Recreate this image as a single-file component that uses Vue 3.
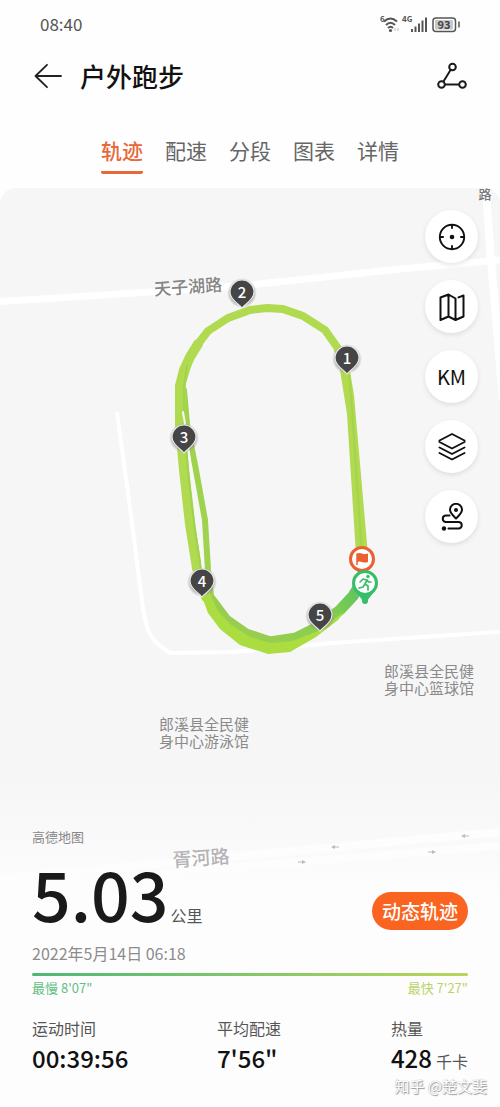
<script setup>
import { ref } from 'vue'

const tabs = ['轨迹', '配速', '分段', '图表', '详情']
const activeTab = ref('轨迹')

const kilometres = [
  { n: 1, x: 347, y: 359 },
  { n: 2, x: 242, y: 293 },
  { n: 3, x: 184, y: 438 },
  { n: 4, x: 202, y: 582 },
  { n: 5, x: 320, y: 616 },
]

const stats = [
  { label: '运动时间', value: '00:39:56', unit: '' },
  { label: '平均配速', value: '7\'56"', unit: '' },
  { label: '热量', value: '428', unit: '千卡' },
]
</script>

<template>
  <div class="page">
    <header>
      <div class="status">
        <span>08:40</span>
        <svg class="status-icons" width="80" height="20" viewBox="0 0 80 20" aria-hidden="true">
          <text x="0" y="8" class="tiny">6</text>
          <g fill="none" stroke="#555" stroke-width="2">
            <path d="M4 7.500Q10.500 1.500 17 7.500" />
            <path d="M6 11Q10.500 6.500 15 11" />
            <path d="M8 14Q10.500 11.500 13 14" />
          </g>
          <circle cx="10.500" cy="16.500" r="1.600" fill="#555" />
          <path d="M15 14v3M18 14v3" stroke="#bbb" />
          <text x="22" y="8" class="tiny">4G</text>
          <path d="M32 15v3M35.500 12.500V18M39 9.500V18M42.500 6.500V18M46 3.500V18" stroke="#555" stroke-width="2" />
          <rect x="53" y="4" width="22.500" height="13.500" rx="3" fill="#fff" stroke="#555" stroke-width="1.500" />
          <rect x="55" y="6" width="18" height="9.500" rx="1" fill="#c8c8c8" />
          <text x="64" y="15" text-anchor="middle" class="battery">93</text>
          <path d="M79 7.500v6" stroke="#555" stroke-width="1.500" />
        </svg>
      </div>
      <div class="title-bar">
        <button class="plain" aria-label="返回">
          <svg width="28" height="28" viewBox="0 0 28 28" fill="none" stroke="#222" stroke-width="1.800" stroke-linecap="round" stroke-linejoin="round">
            <path d="M27 14H1.500M13 2.800 1.500 14 13 25.200" />
          </svg>
        </button>
        <h1>户外跑步</h1>
        <button class="plain share" aria-label="分享">
          <svg width="30" height="28" viewBox="0 0 30 28" fill="none" stroke="#1a1a1a" stroke-width="2">
            <circle cx="15.500" cy="5" r="3.300" />
            <circle cx="4.500" cy="22.500" r="3.300" />
            <circle cx="25.500" cy="22.500" r="3.300" />
            <path d="M13.700 7.800 6.300 19.700M7.800 22.500h14.400" />
          </svg>
        </button>
      </div>
      <nav class="tabs">
        <button
          v-for="tab in tabs"
          :key="tab"
          :class="['tab', { active: tab === activeTab }]"
          @click="activeTab = tab"
        >{{ tab }}</button>
      </nav>
    </header>

    <main class="stage">
      <svg class="map" viewBox="0 188 500 919" preserveAspectRatio="xMidYMin slice">
        <defs>
          <linearGradient id="fade" x1="0" y1="0" x2="0" y2="1">
            <stop offset="0" stop-color="#fdfcfd" stop-opacity="0" />
            <stop offset="0.700" stop-color="#fdfcfd" stop-opacity="0.700" />
            <stop offset="1" stop-color="#fefdfe" />
          </linearGradient>
          <linearGradient id="lap" gradientUnits="userSpaceOnUse" x1="362" y1="590" x2="270" y2="645">
            <stop offset="0" stop-color="#58c45f" />
            <stop offset="0.350" stop-color="#84cd4f" />
            <stop offset="1" stop-color="#98ce50" />
          </linearGradient>
          <radialGradient id="halo">
            <stop offset="0.750" stop-color="#777" stop-opacity="0.600" />
            <stop offset="1" stop-color="#999" stop-opacity="0" />
          </radialGradient>
        </defs>
        <rect x="-500" y="188" width="1500" height="919" fill="#f7f6f7" />

        <g fill="none" stroke="#fff" stroke-linejoin="round">
          <path d="M-10 302 120 294 240 286 400 269 510 259" stroke-width="7" />
          <path d="M486 188 491 260 503 400" stroke-width="8" />
          <path d="M117 412 132 523 143 609Q147 632 153 639T170 653L233 652 333 643 510 631" stroke-width="4" />
          <path d="M-10 880 250 855 510 831M-10 891 250 866 510 845" stroke-width="8" />
        </g>

        <g fill="none" stroke-linejoin="round" stroke-linecap="round">
          <path d="M184 390 187 424 196 470 205 520 208 570 212 603" stroke="#9fd24f" stroke-width="6" />
          <path d="M211 600 226 620 246 634 270 642 296 638 318 627 340 610 353 596 363 580" stroke="url(#lap)" stroke-width="11" />
          <path d="M345 371 337 347 325 330 303 316 283 309 267 308 250 310 228 318 208 331 198 344 190 356 182 383 181 424" stroke="#b0da50" stroke-width="8" />
          <path d="M198 344 190 357 184 370 180 386 180 424 184 470 190 524 197 568 206 597" stroke="#b0da50" stroke-width="10" />
          <path d="M187 366 184 386 184 424 189 480 195 530 201 570" stroke="#9fd24f" stroke-width="2" />
          <path d="M183 412 185 424M188 446 194 490 200 540 203 570M209 597 212 603" stroke="#f8f8f5" stroke-width="2" />
        </g>
        <path d="M201 594 211 596 218 611 230 624 250 637 270 643 292 641 318 631 345 611 338 620 316 637 290 652 268 654 240 645 220 629 208 613Z" fill="#abdc40" />
        <path d="M340 370 350 371 354 395 368 555 356 555 347 414Z" fill="#b1da50" />
        <path d="M349 374 351 395 362 555" fill="none" stroke="#a2d44e" stroke-width="2" />

        <g v-for="k in kilometres" :key="k.n" :transform="`translate(${k.x} ${k.y})`">
          <circle r="15" fill="url(#halo)" />
          <path d="M0 15C-3 11-12 7-12-1A12 12 0 0 1 12-1C12 7 3 11 0 15Z" fill="#454545" stroke="#e8e8e8" stroke-width="1.200" />
          <text y="5" class="km">{{ k.n }}</text>
        </g>

        <g transform="translate(362 559)">
          <path d="M0 19-7 9H7Z" fill="#eb6030" />
          <circle r="11.500" fill="#fff" stroke="#eb6030" stroke-width="3" />
          <path d="M-5-5.500Q-2-6.500 0-5.500T6-5.500V3Q3 4 0 3T-5 3Z" fill="#eb6030" />
          <path d="M-5-5.500V6" stroke="#eb6030" stroke-width="1.500" />
        </g>
        <g transform="translate(365 583)">
          <circle cy="18" r="3" fill="#36bd68" />
          <path d="M-11 6-2 18H2L11 6Z" fill="#36bd68" />
          <circle r="11.500" fill="#fff" stroke="#36bd68" stroke-width="3" />
          <circle cx="3" cy="-6.500" r="1.700" fill="#36bd68" />
          <path d="M-5-1-2-4 2-3 0 1 3 3V7M0 1-2 4-6 5M2-3 3.500-1 6-1" fill="none" stroke="#36bd68" stroke-width="1.700" stroke-linecap="round" stroke-linejoin="round" />
        </g>
        <rect x="-500" y="770" width="1500" height="120" fill="url(#fade)" />
        <rect x="-500" y="889" width="1500" height="218" fill="#fefdfe" />

        <g fill="#bbb">
          <path d="m331 847 4-2v1.500h4v1h-4v1.500zM461 836l4-2v1.500h4v1h-4v1.500z" />
          <path d="m306 862-4-2v1.500h-4v1h4v1.500zM436 852l-4-2v1.500h-4v1h4v1.500z" />
        </g>
        <g class="road">
          <text x="188" y="293" transform="rotate(-4 189 287)" font-size="17" fill="#858585">天子湖路</text>
          <text x="201" y="865" transform="rotate(-4 200 858)" font-size="19" fill="#b4b3b4">胥河路</text>
          <text x="485" y="199" font-size="13" fill="#777">路</text>
        </g>
        <g class="place">
          <text x="429" y="677">郎溪县全民健</text>
          <text x="429" y="694">身中心篮球馆</text>
          <text x="204" y="730">郎溪县全民健</text>
          <text x="204" y="747">身中心游泳馆</text>
        </g>
      </svg>

      <div class="tools">
        <button class="tool" aria-label="定位">
          <svg width="28" height="28" viewBox="0 0 28 28" fill="none" stroke="#111" stroke-width="1.900">
            <circle cx="14" cy="14" r="12.200" />
            <path d="M14 1.800v4M14 22.200v4M1.800 14h4M22.200 14h4" />
            <circle cx="14" cy="14" r="2.300" fill="#111" stroke="none" />
          </svg>
        </button>
        <button class="tool" aria-label="地图">
          <svg width="28" height="28" viewBox="0 0 28 28" fill="none" stroke="#111" stroke-width="2" stroke-linejoin="round" stroke-linecap="round">
            <path d="M2.500 4.500 10.500 1.500V23.500L2.500 27ZM10.500 1.500 17.500 5.500V27L10.500 23.500M17.500 27 25.500 23.500V2.500L20.500 4.400" />
          </svg>
        </button>
        <button class="tool unit-tool">KM</button>
        <button class="tool" aria-label="图层">
          <svg width="28" height="28" viewBox="0 0 28 28" fill="none" stroke="#111" stroke-width="1.900" stroke-linejoin="round" stroke-linecap="round">
            <path d="M14 1 26.500 7.500V9L14 15.500 1.500 9V7.500ZM1.500 14.500 14 21 26.500 14.500M1.500 20 14 26.500 26.500 20" />
          </svg>
        </button>
        <button class="tool" aria-label="路线">
          <svg width="28" height="28" viewBox="0 0 28 28" fill="none" stroke="#111" stroke-width="2" stroke-linecap="round" stroke-linejoin="round">
            <path d="M18 15.500C15 12.500 12 10 12 6.800A6 6 0 0 1 24 6.800C24 10 21 12.500 18 15.500Z" />
            <circle cx="18" cy="7" r="2" fill="#111" stroke="none" />
            <path d="M11.500 12.500H7.500A3.300 3.300 0 0 0 7.500 19H21A3.300 3.300 0 0 1 21 25.500H10.500" />
            <circle cx="6" cy="25.500" r="2.200" fill="#111" stroke="none" />
          </svg>
        </button>
      </div>

      <section class="panel">
        <p class="credit">高德地图</p>
        <div class="summary">
          <p class="distance"><strong>5.03</strong><span>公里</span></p>
          <button class="replay">动态轨迹</button>
        </div>
        <p class="date">2022年5月14日 06:18</p>
        <div class="pace-bar"></div>
        <div class="pace-labels">
          <span class="slow">最慢 8'07"</span>
          <span class="fast">最快 7'27"</span>
        </div>
        <dl class="stats">
          <div v-for="s in stats" :key="s.label">
            <dt>{{ s.label }}</dt>
            <dd>{{ s.value }}<small v-if="s.unit">{{ s.unit }}</small></dd>
          </div>
        </dl>
      </section>
      <span class="watermark">知乎 @楚文斐</span>
    </main>
  </div>
</template>

<style>
body {
  background: #fefefe;
}
</style>

<style scoped>
.page {
  display: flex;
  flex-direction: column;
  min-height: 100vh;
  font-family: "Noto Sans CJK SC", "Noto Sans", sans-serif;
  color: #111;
}
button {
  border: 0;
  padding: 0;
  background: none;
  font-family: inherit;
  color: inherit;
  cursor: pointer;
}
svg {
  display: block;
}
p, h1, dl, dd {
  margin: 0;
}
.status {
  display: flex;
  justify-content: space-between;
  align-items: center;
  height: 48px;
  padding: 0 40px;
  font-size: 17px;
  line-height: 24px;
  color: #555;
}
.tiny {
  font-size: 8px;
  font-weight: 700;
  fill: #555;
}
.battery {
  font-size: 11px;
  font-weight: 700;
  fill: #444;
}
.title-bar {
  display: flex;
  align-items: center;
  height: 56px;
  padding: 0 33px 0 34px;
}
h1 {
  margin-left: 18px;
  font-size: 26px;
  line-height: 36px;
  font-weight: 500;
}
.share {
  margin-left: auto;
}
.tabs {
  display: flex;
  justify-content: center;
  gap: 22px;
  padding: 30px 0 14px;
}
.tab {
  padding-bottom: 4px;
  border-bottom: 3px solid transparent;
  border-radius: 2px;
  font-size: 21px;
  line-height: 33px;
  color: #666;
}
.tab.active {
  border-color: #e8683a;
  color: #e8683a;
  font-weight: 500;
}
.stage {
  position: relative;
  flex: 1;
  display: flex;
  flex-direction: column;
  border-radius: 16px 16px 0 0;
  overflow: hidden;
}
.map {
  position: absolute;
  inset: 0;
  width: 100%;
  height: 100%;
}
.road {
  text-anchor: middle;
  font-weight: 500;
}
.place {
  text-anchor: middle;
  font-size: 15px;
  fill: #8a8a8a;
}
.km {
  font-size: 15px;
  font-weight: 500;
  text-anchor: middle;
  fill: #fff;
}
.tools {
  position: relative;
  align-self: flex-end;
  display: flex;
  flex-direction: column;
  gap: 17px;
  padding: 22px 22px 0 0;
}
.tool {
  display: grid;
  place-items: center;
  width: 53px;
  height: 53px;
  border-radius: 50%;
  background: #fff;
  box-shadow: 0 2px 5px rgba(0, 0, 0, 0.1);
  color: #111;
}
.unit-tool {
  font-size: 20px;
  line-height: 24px;
}
.panel {
  position: relative;
  margin-top: auto;
  padding: 0 32px 30px;
}
.credit {
  font-size: 13px;
  line-height: 20px;
  color: #888;
}
.summary {
  display: flex;
  justify-content: space-between;
  align-items: center;
  margin-top: 6px;
}
.distance {
  display: flex;
  align-items: baseline;
  gap: 2px;
}
.distance strong {
  font-size: 68px;
  line-height: 80px;
  font-weight: 500;
  color: #1a1a1a;
}
.distance span {
  font-size: 16px;
  color: #555;
}
.replay {
  height: 38px;
  margin-top: 36px;
  padding: 0 10px;
  border-radius: 19px;
  background: #fa6420;
  color: #fff;
  font-size: 19px;
  line-height: 38px;
  font-weight: 500;
}
.date {
  margin-top: 8px;
  font-size: 16px;
  line-height: 24px;
  color: #8c8c8c;
}
.pace-bar {
  height: 3px;
  margin-top: 8px;
  border-radius: 2px;
  background: linear-gradient(90deg, #4eb878, #b9d65a);
}
.pace-labels {
  display: flex;
  justify-content: space-between;
  margin-top: 2px;
  font-size: 13px;
  line-height: 20px;
}
.slow {
  color: #5fbf84;
}
.fast {
  color: #b9d468;
}
.stats {
  display: grid;
  grid-template-columns: 17fr 16fr 7fr;
  margin-top: 18px;
}
.stats dt {
  font-size: 16px;
  line-height: 24px;
  color: #555;
}
.stats dd {
  margin-top: 2px;
  font-size: 24px;
  line-height: 32px;
  font-weight: 500;
  white-space: nowrap;
}
.stats small {
  margin-left: 4px;
  font-size: 16px;
  font-weight: 400;
  color: #555;
}
.watermark {
  position: absolute;
  right: 13px;
  bottom: 10px;
  font-size: 15px;
  line-height: 22px;
  color: #fff;
  text-shadow: 0 0 1px #999, 1px 1px 1px #999;
}
</style>
